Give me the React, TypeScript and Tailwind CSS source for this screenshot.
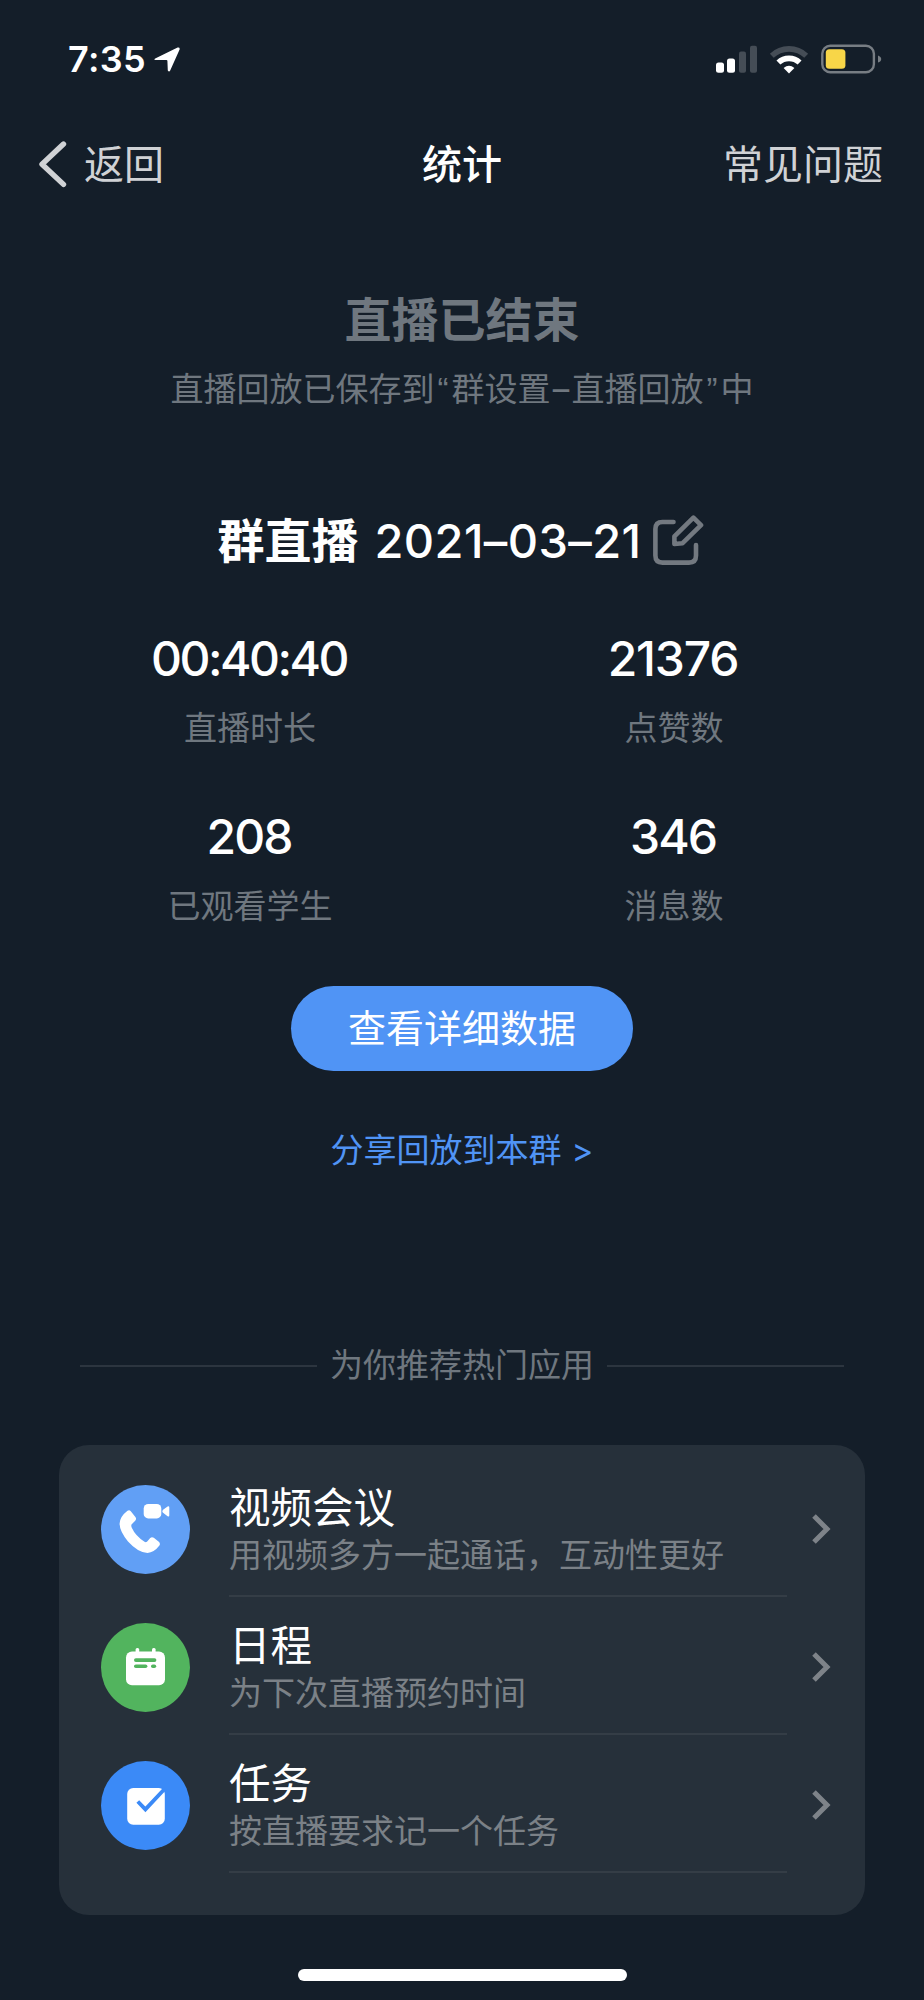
import React from "react";

const cjk = "font-['Noto_Sans_CJK_SC',sans-serif]";
const latin = "font-['Inter','Noto_Sans_CJK_SC',sans-serif]";
const quote = "inline-block w-[17px] text-center font-['Liberation_Sans',sans-serif]";

const stats = [
  { value: "00:40:40", label: "直播时长", tracking: "tracking-[-2.5px]" },
  { value: "21376", label: "点赞数", tracking: "tracking-[-1.2px]" },
  { value: "208", label: "已观看学生", tracking: "tracking-[-2px]" },
  { value: "346", label: "消息数", tracking: "tracking-[-2px]" },
];

const VideoIcon = () => (
  <svg className="size-[89px] shrink-0" viewBox="0 0 89 89" fill="#fff">
    <circle cx="44.5" cy="44.5" r="44.5" fill="#619ff5" />
    <path d="M26.5 25.8Q28.3 24.6 29.8 26.2L34.4 32Q35.8 34 34.2 35.8L30.5 39.6Q30 41 30.8 42.8Q34.5 51 43.5 56.8Q45 57.6 46.2 56.6L49 53.2Q50.8 51.4 52.8 52.8L57.8 56.8Q59.8 58.6 58.2 60.8Q53 67.6 46.5 68Q37 67.6 27 56.5Q18.5 46 18.6 38.5Q19 31.5 26.5 25.8Z" />
    <rect x="42.7" y="19" width="17.6" height="14.4" rx="4.5" />
    <path d="M61.3 26.2Q61.6 25.3 62.4 24.6L66.6 21.4Q68.3 20.6 68.3 22.6V30.2Q68.3 32.2 66.6 31.3L62.4 28Q61.3 27.2 61.3 26.2Z" />
  </svg>
);

const CalendarIcon = () => (
  <svg className="size-[89px] shrink-0" viewBox="0 0 89 89" fill="#fff">
    <circle cx="44.5" cy="44.5" r="44.5" fill="#52b45e" />
    <rect x="25" y="28.6" width="39" height="33.6" rx="6" />
    <rect x="34.6" y="25" width="3.6" height="8" rx="1.5" />
    <rect x="51" y="25" width="3.6" height="8" rx="1.5" />
    <g fill="#52b45e">
      <rect x="33" y="35.2" width="22.4" height="3.8" rx="1.9" />
      <rect x="33" y="41.5" width="13.4" height="3.6" rx="1.8" />
      <rect x="50" y="41.5" width="5.2" height="3.6" rx="1.8" />
    </g>
  </svg>
);

const TaskIcon = () => (
  <svg className="size-[89px] shrink-0" viewBox="0 0 89 89" fill="none">
    <circle cx="44.5" cy="44.5" r="44.5" fill="#3b8af7" />
    <rect x="26.2" y="27" width="37.6" height="36.8" rx="6" fill="#fff" />
    <path d="M36.8 40.5L44.4 48.4L64 27.5" stroke="#3b8af7" strokeWidth="3.8" />
  </svg>
);

const apps = [
  { icon: <VideoIcon />, title: "视频会议", desc: "用视频多方一起通话，互动性更好" },
  { icon: <CalendarIcon />, title: "日程", desc: "为下次直播预约时间" },
  { icon: <TaskIcon />, title: "任务", desc: "按直播要求记一个任务" },
];

const StatusBar = () => (
  <div className="flex h-[118px] items-center justify-between pl-[68px] pr-[42px]">
    <div className="flex items-center gap-2">
      <span className={`${latin} text-[36px] font-semibold leading-none tracking-[0.4px]`}>7:35</span>
      <svg className="h-[25px] w-[26px]" viewBox="0 0 26 25" fill="#fff">
        <path d="M1.2 11.6L23.6 0.6Q26 0 25.6 2.4L16.2 23.6Q15 25.4 13.8 23.4L13.4 13.8Q13.3 13 12.4 12.9L1.4 13Q-0.6 12.6 1.2 11.6Z" />
      </svg>
    </div>
    <div className="flex items-center">
      <svg className="h-[28px] w-[42px]" viewBox="0 0 42 28">
        <rect x="0" y="17.5" width="8" height="10.3" rx="2.5" fill="#fff" />
        <rect x="11" y="13.5" width="8" height="14.3" rx="2.5" fill="#fff" />
        <rect x="23" y="6.5" width="7" height="21.3" rx="2" fill="#454d56" />
        <rect x="34" y="0.8" width="7" height="27" rx="2" fill="#454d56" />
      </svg>
      <svg className="ml-[11px] h-[29px] w-[40px]" viewBox="0 0 40 29" fill="none">
        <path d="M2.8 10.7A25 25 0 0 1 37.2 10.7" stroke="#454d56" strokeWidth="5.6" />
        <path d="M9.4 17.6A15.3 15.3 0 0 1 30.6 17.6" stroke="#fff" strokeWidth="5.6" />
        <path d="M20 28.6L14.6 23Q20 18.4 25.4 23Z" fill="#fff" />
      </svg>
      <svg className="ml-[12px] h-[30px] w-[61px]" viewBox="0 0 61 30" fill="none">
        <rect x="1.3" y="1.7" width="51.6" height="26.6" rx="8" stroke="#777d83" strokeWidth="2.4" />
        <rect x="4.8" y="5.3" width="19.6" height="19.4" rx="3.5" fill="#f8d648" />
        <path d="M57 11.4Q60.2 12.5 60.2 15Q60.2 17.5 57 18.6Z" fill="#777d83" />
      </svg>
    </div>
  </div>
);

const NavBar = () => (
  <div className="grid h-[92px] grid-cols-3 items-center pl-[38px] pr-[41px] text-[40px] leading-none text-[#d0d2d5]">
    <div className="flex items-center gap-[17px]">
      <svg className="h-[48px] w-[29px]" viewBox="0 0 29 48" fill="none">
        <path d="M25.5 4L4 24.2L25.5 44.4" stroke="#d0d2d5" strokeWidth="5.4" strokeLinecap="round" strokeLinejoin="round" />
      </svg>
      <span className="pb-[5px]">返回</span>
    </div>
    <div className="pb-[5px] pl-[3px] text-center font-medium text-white">统计</div>
    <div className="pb-[5px] text-right">常见问题</div>
  </div>
);

const EditIcon = () => (
  <svg className="h-[52px] w-[52px]" viewBox="0 0 52 52" fill="none" stroke="#737980" strokeWidth="4.6" strokeLinecap="round" strokeLinejoin="round">
    <path d="M20.5 7H9.5Q2.4 7 2.4 14V40.5Q2.4 47.6 9.5 47.6H36Q43 47.6 43 40.5V30" />
    <path d="M40.4 2.6L48 10.2L29.6 28.2L21.4 29V21.4Z" />
  </svg>
);

export default function App() {
  return (
    <div className={`${cjk} flex h-[2000px] w-[924px] flex-col overflow-hidden bg-[#141e29] text-white`}>
      <StatusBar />
      <NavBar />

      <div className="mt-[83px] text-center text-[#6f777f]">
        <h1 className="text-[47px] font-semibold leading-[47px]">直播已结束</h1>
        <p className="mt-[31px] text-[33px] leading-[33px]">
          直播回放已保存到<span className={quote}>“</span>群设置
          <span className={`${latin} inline-block w-[21px] text-center`}>–</span>直播回放
          <span className={quote}>”</span>中
        </p>
      </div>

      <div className="mt-[109px] flex h-[52px] items-center justify-center pr-[2px]">
        <span className="pb-[8px] text-[47px] font-semibold leading-none">群直播</span>
        <span className={`${latin} ml-[16px] pb-[2px] text-[47px] font-medium leading-none tracking-[0.4px]`}>2021–03–21</span>
        <span className="ml-[11px]">
          <EditIcon />
        </span>
      </div>

      <div className="mt-[68px] grid grid-cols-[424px_424px] px-[38px]">
        {stats.map((stat) => (
          <div key={stat.label} className="h-[178px] text-center">
            <div className={`${latin} ${stat.tracking} pr-[2px] text-[48px] font-medium leading-[48px]`}>{stat.value}</div>
            <div className="mt-[27px] text-[33px] leading-[33px] text-[#6f777f]">{stat.label}</div>
          </div>
        ))}
      </div>

      <button className="mx-auto mt-[-5px] h-[85px] w-[342px] shrink-0 rounded-full bg-[#5094f5] pb-[6px] text-[38px] leading-none">
        查看详细数据
      </button>
      <a className="mt-[61px] text-center text-[33px] leading-[33px] text-[#5094f5]">
        分享回放到本群<span className={`${latin} ml-[10px]`}>&gt;</span>
      </a>

      <div className="mt-[184px] flex items-center gap-[13px] px-[80px]">
        <div className="h-[2px] flex-1 bg-[#2c353f]" />
        <span className="-mt-[4px] text-[33px] leading-[33px] text-[#6f777f]">为你推荐热门应用</span>
        <div className="h-[2px] flex-1 bg-[#2c353f]" />
      </div>

      <div className="mx-[59px] mt-[65px] h-[470px] shrink-0 rounded-[30px] bg-[#26303a] pt-[14px]">
        {apps.map((app) => (
          <div key={app.title} className="flex h-[138px] pl-[42px]">
            <div className="pt-[26px]">{app.icon}</div>
            <div className="ml-[39px] w-[558px] border-b-2 border-[#343d46] pt-[25px]">
              <div className="text-[41.5px] leading-[42px]">{app.title}</div>
              <div className="mt-[11px] text-[33px] leading-[33px] text-[#7b8187]">{app.desc}</div>
            </div>
            <svg className="ml-[24px] mt-[54px] h-[32px] w-[20px]" viewBox="0 0 20 32" fill="none">
              <path d="M3 3L16 16L3 29" stroke="#7e8389" strokeWidth="5" />
            </svg>
          </div>
        ))}
      </div>

      <div className="ml-[298px] mt-[54px] h-[12px] w-[329px] shrink-0 rounded-full bg-white" />
    </div>
  );
}
